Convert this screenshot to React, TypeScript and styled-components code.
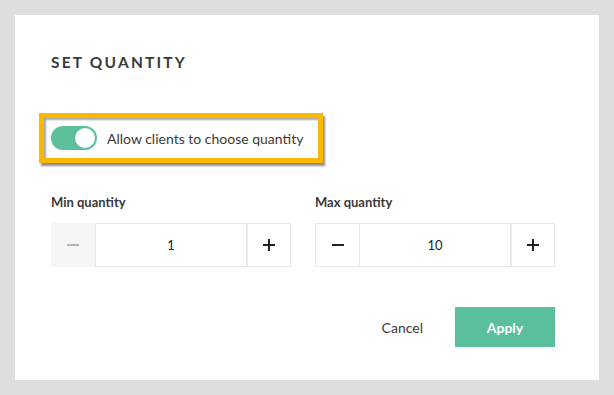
import { useState } from "react";
import styled, { createGlobalStyle } from "styled-components";

const GlobalStyle = createGlobalStyle`
  html, body {
    margin: 0;
    padding: 0;
    background: #dedede;
  }
  body {
    font-family: Lato, "Open Sans", "Liberation Sans", sans-serif;
    color: #333;
  }
`;

const Page = styled.div`
  width: 614px;
  height: 395px;
  padding: 15px;
  box-sizing: border-box;
`;

const Card = styled.div`
  width: 584px;
  height: 365px;
  background: #fff;
  box-sizing: border-box;
  padding: 38px 44px 0 24px;
`;

const Title = styled.h2`
  margin: 0 0 0 12px;
  font-size: 15.5px;
  font-weight: 700;
  letter-spacing: 2.2px;
  line-height: 18px;
  color: #3a3a3a;
`;

const Highlight = styled.div`
  margin-top: 42px;
  width: 284px;
  height: 50px;
  box-sizing: border-box;
  border: 5px solid #fbb800;
  box-shadow: inset 2px 2px 2px rgba(0, 0, 0, 0.35), 2px 3px 2px rgba(0, 0, 0, 0.45);
  display: flex;
  align-items: center;
  gap: 10px;
  padding-left: 7px;
`;

const Track = styled.button<{ $on: boolean }>`
  width: 46px;
  height: 24px;
  border-radius: 12px;
  border: none;
  padding: 2px;
  background: ${(p) => (p.$on ? "#5bbf9b" : "#cfd3d2")};
  display: flex;
  justify-content: ${(p) => (p.$on ? "flex-end" : "flex-start")};
  cursor: pointer;
`;

const Knob = styled.span`
  width: 20px;
  height: 20px;
  border-radius: 50%;
  background: #fff;
`;

const ToggleLabel = styled.span`
  font-size: 14px;
  color: #3a3a3a;
`;

const Fields = styled.div`
  margin: 31px 0 0 12px;
  display: grid;
  grid-template-columns: 240px 240px;
  column-gap: 24px;
`;

const Field = styled.div`
  display: flex;
  flex-direction: column;
`;

const FieldLabel = styled.div`
  font-size: 13px;
  font-weight: 700;
  line-height: 16px;
  color: #3a3a3a;
  margin-bottom: 13px;
`;

const Stepper = styled.div`
  display: grid;
  grid-template-columns: 44px 1fr 44px;
  height: 44px;
`;

const StepButton = styled.button<{ $disabled?: boolean; $side: "left" | "right" }>`
  border: ${(p) => (p.$disabled ? "none" : "1px solid #e8e8e8")};
  ${(p) => (p.$side === "left" ? "border-right: none;" : "")}
  background: ${(p) => (p.$disabled ? "#f4f5f4" : "#fff")};
  padding: 0;
  display: flex;
  align-items: center;
  justify-content: center;
  color: ${(p) => (p.$disabled ? "#b5b5b5" : "#222")};
  cursor: ${(p) => (p.$disabled ? "default" : "pointer")};
`;

const Value = styled.div`
  border: 1px solid #e8e8e8;
  display: flex;
  align-items: center;
  justify-content: center;
  font-size: 13px;
  color: #222;
`;

const Actions = styled.div`
  margin-top: 40px;
  display: flex;
  justify-content: flex-end;
  align-items: center;
`;

const CancelButton = styled.button`
  background: none;
  border: none;
  font-family: inherit;
  font-size: 14px;
  color: #3a3a3a;
  padding: 0;
  margin-right: 32px;
  cursor: pointer;
`;

const ApplyButton = styled.button`
  width: 100px;
  height: 40px;
  border: none;
  background: #5bbf9b;
  color: #fff;
  font-family: inherit;
  font-size: 14px;
  font-weight: 700;
  cursor: pointer;
`;

function Minus() {
  return (
    <svg width="12" height="12" viewBox="0 0 12 12">
      <rect x="0" y="5" width="12" height="2" fill="currentColor" />
    </svg>
  );
}

function Plus() {
  return (
    <svg width="12" height="12" viewBox="0 0 12 12">
      <rect x="0" y="5" width="12" height="2" fill="currentColor" />
      <rect x="5" y="0" width="2" height="12" fill="currentColor" />
    </svg>
  );
}

interface QtyProps {
  label: string;
  value: number;
  min: number;
  onChange: (v: number) => void;
}

function QuantityField({ label, value, min, onChange }: QtyProps) {
  const atMin = value <= min;
  return (
    <Field>
      <FieldLabel>{label}</FieldLabel>
      <Stepper>
        <StepButton $side="left" $disabled={atMin} onClick={() => !atMin && onChange(value - 1)}>
          <Minus />
        </StepButton>
        <Value>{value}</Value>
        <StepButton $side="right" onClick={() => onChange(value + 1)}>
          <Plus />
        </StepButton>
      </Stepper>
    </Field>
  );
}

export default function App() {
  const [on, setOn] = useState(true);
  const [minQ, setMinQ] = useState(1);
  const [maxQ, setMaxQ] = useState(10);

  return (
    <Page>
      <GlobalStyle />
      <Card>
        <Title>SET QUANTITY</Title>
        <Highlight>
          <Track $on={on} onClick={() => setOn(!on)}>
            <Knob />
          </Track>
          <ToggleLabel>Allow clients to choose quantity</ToggleLabel>
        </Highlight>
        <Fields>
          <QuantityField label="Min quantity" value={minQ} min={1} onChange={setMinQ} />
          <QuantityField label="Max quantity" value={maxQ} min={1} onChange={setMaxQ} />
        </Fields>
        <Actions>
          <CancelButton>Cancel</CancelButton>
          <ApplyButton>Apply</ApplyButton>
        </Actions>
      </Card>
    </Page>
  );
}
